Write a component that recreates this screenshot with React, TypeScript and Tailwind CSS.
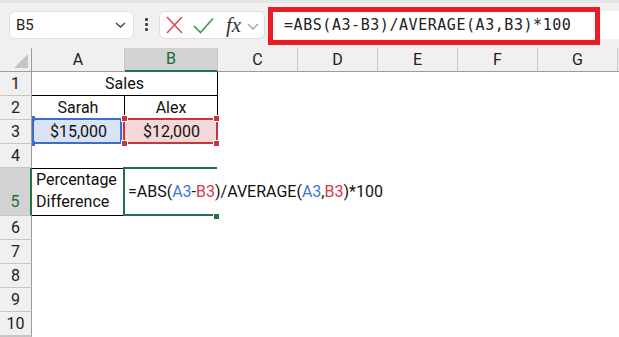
import React from "react";

const cols = ["A", "B", "C", "D", "E", "F", "G", "H"];
const rows = [1, 2, 3, 4, 5, 6, 7, 8, 9, 10, 11];

function ColHeader({ c }: { c: string }) {
  if (c === "B") {
    return (
      <div className="flex items-center justify-center bg-[#d2d2d2] border-r border-[#c6c6c6] border-b-2 border-b-[#217346] text-[#1e6b3f]">
        {c}
      </div>
    );
  }
  return (
    <div className="flex items-center justify-center bg-[#f0f0f0] border-r border-[#c6c6c6] border-b border-b-[#9b9b9b] text-[#222]">
      {c === "H" ? "" : c}
    </div>
  );
}

function RowHeader({ r }: { r: number }) {
  if (r === 5) {
    return (
      <div className="flex items-end justify-center pb-[1px] bg-[#d2d2d2] border-b border-[#c6c6c6] border-r-2 border-r-[#217346] text-[#1e6b3f]">
        {r}
      </div>
    );
  }
  return (
    <div className="flex items-center justify-center bg-[#f0f0f0] border-b border-[#c6c6c6] border-r border-r-[#9b9b9b] text-[#222]">
      {r === 11 ? "" : r}
    </div>
  );
}

export default function App() {
  return (
    <div
      className="w-[619px] h-[337px] overflow-hidden bg-white relative"
      style={{ fontFamily: "Roboto, 'Liberation Sans', sans-serif" }}
    >
      {/* Toolbar */}
      <div className="h-[48px] bg-[#f1f0ef] border-t-[3px] border-[#e6e4e3] flex items-start pt-[8px]">
        {/* Name box */}
        <div className="ml-[9px] w-[125px] h-[28px] bg-white border border-[#e1dfdd] rounded-[6px] flex items-center pl-[6px] pr-[6px] justify-between">
          <span className="text-[15px] text-[#222]">B5</span>
          <svg width="11" height="6" viewBox="0 0 11 6" className="mr-[1px]">
            <path d="M1 1 L5.5 5 L10 1" fill="none" stroke="#444" strokeWidth="1.4" />
          </svg>
        </div>
        {/* dots */}
        <div className="ml-[11px] mt-[7px] flex flex-col gap-[2px]">
          <div className="w-[3px] h-[3px] bg-[#444] rounded-[1px]" />
          <div className="w-[3px] h-[3px] bg-[#444] rounded-[1px]" />
          <div className="w-[3px] h-[3px] bg-[#444] rounded-[1px]" />
        </div>
        {/* buttons */}
        <div className="ml-[11px] w-[106px] h-[28px] bg-white border border-[#e1dfdd] rounded-[6px] flex items-center pl-[6px]">
          <svg width="17" height="18" viewBox="0 0 17 18">
            <path d="M1 1 L16 17 M16 1 L1 17" stroke="#e5484d" strokeWidth="1.6" fill="none" />
          </svg>
          <svg width="21" height="17" viewBox="0 0 21 17" className="ml-[10px]">
            <path d="M1 9 L7.5 15.5 L20 1.5" stroke="#3a9b4c" strokeWidth="1.6" fill="none" />
          </svg>
          <span
            className="ml-[12px] text-[21px] italic text-[#333] leading-none"
            style={{ fontFamily: "'Liberation Serif', serif" }}
          >
            fx
          </span>
          <svg width="12" height="7" viewBox="0 0 12 7" className="ml-[6px] mt-[2px]">
            <path d="M1 1 L6 6 L11 1" fill="none" stroke="#a0a0a0" strokeWidth="1.3" />
          </svg>
        </div>
        {/* formula bar */}
        <div className="ml-[3px] flex-1 h-[28px] bg-white flex items-center relative">
          <span
            className="ml-[16px] text-[15px] tracking-[0.55px] text-[#222]"
            style={{ fontFamily: "'DejaVu Sans Mono', monospace" }}
          >
            =ABS(A3-B3)/AVERAGE(A3,B3)*100
          </span>
          <div className="absolute left-0 top-[-4px] w-[332px] h-[38px] border-[5px] border-[#ec1c24]" />
        </div>
      </div>

      {/* Sheet */}
      <div className="relative">
        <div className="grid grid-cols-[32px_93px_93px_80px_80px_80px_80px_80px_80px] grid-rows-[24px_24px_24px_24px_24px_48px_24px_24px_24px_24px_24px] text-[16px] w-max">
          {/* corner */}
          <div className="bg-[#f0f0f0] border-r border-r-[#9b9b9b] border-b border-b-[#9b9b9b] relative">
            <svg width="14" height="14" viewBox="0 0 14 14" className="absolute right-[3px] bottom-[3px]">
              <path d="M14 0 L14 14 L0 14 Z" fill="#c4c4c4" />
            </svg>
          </div>
          {cols.map((c) => (
            <ColHeader key={c} c={c} />
          ))}
          {rows.map((r) => (
            <React.Fragment key={r}>
              <RowHeader r={r} />
              {r === 1 ? (
                <>
                  <div className="col-span-2 flex items-center justify-center border-b border-r border-black text-[#111]">
                    Sales
                  </div>
                  {cols.slice(2).map((c) => (
                    <div key={c} />
                  ))}
                </>
              ) : r === 2 ? (
                <>
                  <div className="flex items-center justify-center border-r border-black text-[#111]">Sarah</div>
                  <div className="flex items-center justify-center border-r border-black text-[#111]">Alex</div>
                  {cols.slice(2).map((c) => (
                    <div key={c} />
                  ))}
                </>
              ) : r === 3 ? (
                <>
                  <div className="flex items-center justify-center bg-[#dae3f3] text-[#111]">$15,000</div>
                  <div className="flex items-center justify-center bg-[#f4d7d8] text-[#111]">$12,000</div>
                  {cols.slice(2).map((c) => (
                    <div key={c} />
                  ))}
                </>
              ) : r === 5 ? (
                <>
                  <div className="flex flex-col justify-end pl-[4px] pb-[2px] border-t border-b border-r border-black text-[#111] leading-[22px]">
                    <span>Percentage</span>
                    <span>Difference</span>
                  </div>
                  {cols.slice(1).map((c) => (
                    <div key={c} />
                  ))}
                </>
              ) : (
                cols.map((c) => <div key={c} />)
              )}
            </React.Fragment>
          ))}
        </div>

        {/* Blue range highlight A3 */}
        <div className="absolute left-[32px] top-[70px] w-[90px] h-[26px] border-2 border-[#3b6ec9]" />
        <div className="absolute left-[32px] top-[68px] w-[3px] h-[5px] bg-[#3b6ec9]" />
        <div className="absolute left-[32px] top-[93px] w-[3px] h-[5px] bg-[#3b6ec9]" />

        {/* Red range highlight B3 */}
        <div className="absolute left-[123px] top-[70px] w-[95px] h-[26px] border-2 border-[#c4373a]" />
        <div className="absolute left-[122px] top-[68px] w-[5px] h-[5px] bg-[#c4373a] outline outline-1 outline-white" />
        <div className="absolute left-[214px] top-[68px] w-[5px] h-[5px] bg-[#c4373a] outline outline-1 outline-white" />
        <div className="absolute left-[122px] top-[93px] w-[5px] h-[5px] bg-[#c4373a] outline outline-1 outline-white" />
        <div className="absolute left-[214px] top-[93px] w-[5px] h-[5px] bg-[#c4373a] outline outline-1 outline-white" />

        {/* Active cell B5 in edit mode */}
        <div className="absolute left-[123px] top-[119px] w-[94px] h-[49px] border-l-2 border-t-2 border-b-2 border-[#217346]" />
        <div className="absolute left-[214px] top-[166px] w-[5px] h-[5px] bg-[#217346] outline outline-1 outline-white" />
        <div className="absolute left-[128px] top-[120px] h-[48px] flex items-center whitespace-nowrap text-[16px] text-[#111]">
          <span>=ABS(</span>
          <span className="text-[#3c78d8]">A3</span>
          <span>-</span>
          <span className="text-[#d63a48]">B3</span>
          <span>)/AVERAGE(</span>
          <span className="text-[#3c78d8]">A3</span>
          <span>,</span>
          <span className="text-[#d63a48]">B3</span>
          <span>)*100</span>
        </div>
      </div>
    </div>
  );
}
